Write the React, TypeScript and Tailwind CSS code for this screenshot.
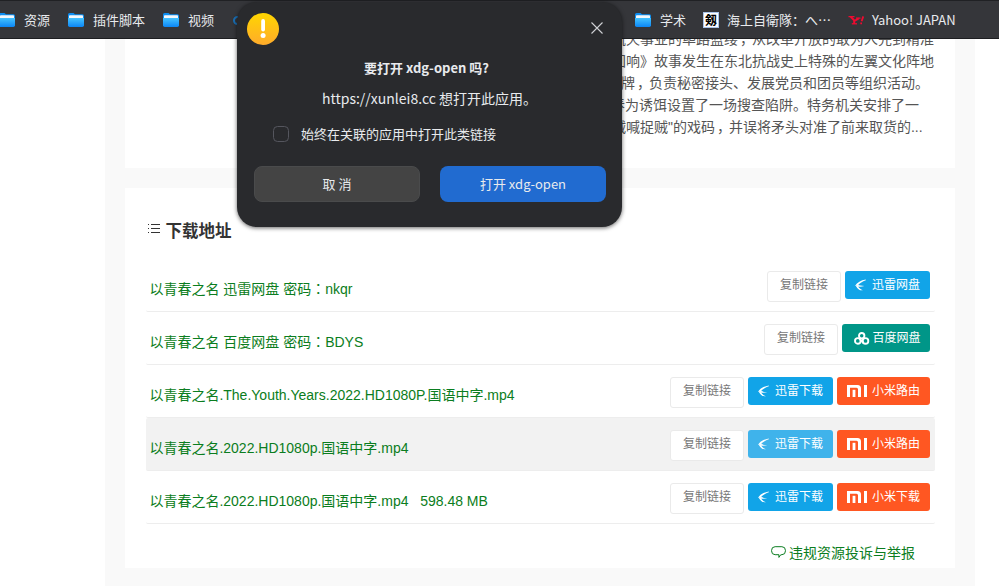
import type { ReactNode } from "react";

const bookmarksLeft = [
    { label: "资源", className: "w-[69px]" },
    { label: "插件脚本", className: "w-[95px]" },
    { label: "视频", className: "w-[70px]" },
]

const introLines = [
    { text: "航天事业的筚路蓝缕，从改革开放的敢为人先到精准", className: "pl-[467px]" },
    { text: "回响》故事发生在东北抗战史上特殊的左翼文化阵地", className: "pl-[467px]" },
    { text: "招牌，负责秘密接头、发展党员和团员等组织活动。", className: "pl-[462px]" },
    { text: "春为诱饵设置了一场搜查陷阱。特务机关安排了一", className: "pl-[466px]" },
    { text: "贼喊捉贼\"的戏码，并误将矛头对准了前来取货的...", className: "pl-[467px]" },
]

type Action = { kind: "thunder" | "baidu" | "mi"; label: string }

const downloads: { name: string; size?: string; hovered?: boolean; actions: Action[] }[] = [
    { name: "以青春之名 迅雷网盘 密码：nkqr", actions: [{ kind: "thunder", label: "迅雷网盘" }] },
    { name: "以青春之名 百度网盘 密码：BDYS", actions: [{ kind: "baidu", label: "百度网盘" }] },
    {
        name: "以青春之名.The.Youth.Years.2022.HD1080P.国语中字.mp4",
        actions: [{ kind: "thunder", label: "迅雷下载" }, { kind: "mi", label: "小米路由" }],
    },
    {
        name: "以青春之名.2022.HD1080p.国语中字.mp4",
        hovered: true,
        actions: [{ kind: "thunder", label: "迅雷下载" }, { kind: "mi", label: "小米路由" }],
    },
    {
        name: "以青春之名.2022.HD1080p.国语中字.mp4",
        size: "598.48 MB",
        actions: [{ kind: "thunder", label: "迅雷下载" }, { kind: "mi", label: "小米下载" }],
    },
]

// Fullwidth comma and colon sit in the middle of the em box
const Punctuated = ({ text }: { text: string }) => (
    <>
        {text.split(/([，：])/).map((part, i) => {
            if (part === "，") return <span key={i} className="-mr-[2px] pl-[2px]">{part}</span>
            if (part === "：") return <span key={i} lang="zh-TW" className="font-['Noto_Sans_CJK_TC',sans-serif] leading-none">{part}</span>
            return part
        })}
    </>
)

const FolderIcon = () => (
    <svg width="16" height="16" viewBox="0 0 16 16" className="shrink-0">
        <defs>
            <linearGradient id="folder" x1="0" y1="0" x2="0" y2="1">
                <stop offset="0" stopColor="#45c3ff" />
                <stop offset="1" stopColor="#0b86f5" />
            </linearGradient>
        </defs>
        <path d="M0 2.5Q0 1 1.5 1H5.5L7 2.3H14.5Q16 2.3 16 4V8H0Z" fill="#0d8df0" />
        <path d="M1 4Q1 3.2 1.8 3.2H14.2Q15 3.2 15 4V8H1Z" fill="#f4f7fa" />
        <path d="M0 6H16V13.3Q16 15 14.3 15H1.7Q0 15 0 13.3Z" fill="url(#folder)" />
    </svg>
)

const YahooIcon = () => (
    <svg width="17" height="12" viewBox="0 0 17 12" className="shrink-0" fill="none" stroke="#f10a30">
        <path d="M0.5 2.6H6.5M8 4.1H12.5" strokeWidth="1.2" />
        <path d="M2.7 2.8L6.2 6.4V9.8M10.8 4.4L6.4 7" strokeWidth="2" />
        <path d="M3.8 9.8H9" strokeWidth="1.3" />
        <path d="M15.3 2.4L13.6 7.2" strokeWidth="1.8" />
        <path d="M12.3 9.4H14" strokeWidth="1.6" />
    </svg>
)

const ThunderIcon = () => (
    <svg width="11" height="12" viewBox="0 0 12 12" className="shrink-0" fill="#fff" preserveAspectRatio="none">
        <path d="M11.8 0.4C6.4 1.2 2.3 3.3 0.1 6.8L3.2 6.3C5.2 4.2 8 2.4 11.8 1.3Z" />
        <path d="M0.1 6.8L3.2 6.1C4.5 6.5 7.3 6.9 10.2 7.1C6.8 8.1 4.3 8 2.4 7.4Z" />
        <path d="M1.6 6.8L3.2 7.2C4.4 9 6 10.2 8.6 11.2C6 11.9 2.8 10.4 1.2 7.2Z" />
    </svg>
)

const BaiduIcon = () => (
    <svg width="16" height="13" viewBox="0 0 16 13" className="shrink-0" fill="none" stroke="#fff" strokeWidth="1.9">
        <circle cx="7.7" cy="3.7" r="2.7" />
        <circle cx="3.8" cy="8.9" r="2.8" />
        <circle cx="11.5" cy="8.9" r="2.8" />
        <path d="M5.7 6.8L9.6 11" />
    </svg>
)

const MiIcon = () => (
    <svg width="20" height="12" viewBox="0 0 20 12" className="shrink-0" fill="#fff">
        <path d="M0 0H10.5Q14 0 14 3.5V12H11V4.2Q11 2.7 9.5 2.7H3V12H0Z" />
        <path d="M5.6 4.8H8.4V12H5.6Z" />
        <path d="M17 0H20V12H17Z" />
    </svg>
)

const ActionButton = ({ action, hovered }: { action: Action; hovered?: boolean }) => {
    if (action.kind === "baidu") {
        return (
            <button className="flex h-7 w-[88px] items-center gap-[3px] rounded-[3px] bg-[#009688] pl-[11.5px] text-xs text-white">
                <BaiduIcon />
                {action.label}
            </button>
        )
    }
    if (action.kind === "mi") {
        return (
            <button className="flex h-7 w-[93px] items-center gap-[5px] rounded-[3px] bg-[#ff5722] pl-[10px] text-xs text-white">
                <MiIcon />
                {action.label}
            </button>
        )
    }
    return (
        <button className={`flex h-7 w-[85px] items-center gap-[6px] rounded-[3px] pl-[10px] text-xs text-white ${hovered ? "bg-[#3fb3eb]" : "bg-[#11a4e8]"}`}>
            <ThunderIcon />
            <span>{action.label}</span>
        </button>
    )
}

const Bookmark = ({ icon, children, className }: { icon: ReactNode; children: ReactNode; className?: string }) => (
    <div className={`flex shrink-0 items-center gap-[9px] whitespace-nowrap ${className ?? ""}`}>
        {icon}
        <span>{children}</span>
    </div>
)

const BookmarksBar = () => (
    <header className="relative flex h-[39px] items-center border-t border-b border-t-[#202124] border-b-[#1d1e21] bg-[#35363a] pt-px font-['Noto_Sans_CJK_SC',sans-serif] text-[13px] text-[#e8eaed]">
        <div className="-ml-px flex w-[636px] shrink-0 items-center">
            {bookmarksLeft.map(({ label, className }) => (
                <Bookmark key={label} icon={<FolderIcon />} className={className}>{label}</Bookmark>
            ))}
            <span className="size-[9px] rounded-full border-2 border-[#1a6fb5]" />
        </div>
        <Bookmark icon={<FolderIcon />} className="w-[68px]">学术</Bookmark>
        <Bookmark
            icon={<span className="flex size-4 items-center justify-center border border-[#a9c4ea] bg-white text-xs leading-none font-bold text-black">剱</span>}
            className="w-[145px] gap-[8px]!"
        >
            海上自衛隊：へ⋯
        </Bookmark>
        <Bookmark icon={<YahooIcon />} className="gap-[7px]!">Yahoo! JAPAN</Bookmark>
    </header>
)

const PermissionDialog = () => (
    <div role="dialog" className="absolute top-[2px] left-[237px] h-[225px] w-[385px] rounded-[20px] bg-[#292a2d] pr-4 pl-[17px] font-['Noto_Sans_CJK_SC',sans-serif] text-[13px] text-[#e8eaed] shadow-[0_1px_4px_rgba(0,0,0,0.6)]">
        <div className="-mx-[7px] flex h-[55px] justify-between pt-[11px] pr-[10.5px]">
            <svg width="32" height="32" viewBox="0 0 32 32">
                <defs>
                    <linearGradient id="warning" x1="0" y1="0" x2="0" y2="1">
                        <stop offset="0" stopColor="#ffd600" />
                        <stop offset="1" stopColor="#ffab2b" />
                    </linearGradient>
                </defs>
                <circle cx="16" cy="16" r="16" fill="url(#warning)" />
                <rect x="14.2" y="6" width="3.8" height="12.5" rx="1.9" fill="#fff" />
                <circle cx="16.1" cy="22.6" r="2.5" fill="#fff" />
            </svg>
            <svg width="12" height="12" viewBox="0 0 12 12" className="mt-[8.5px]" stroke="#d0d2d5" strokeWidth="1.1">
                <path d="M0.5 0.5L11.5 11.5M11.5 0.5L0.5 11.5" />
            </svg>
        </div>
        <h2 className="-ml-[7px] h-[22px] text-center leading-[22px] font-bold">要打开 xdg-open 吗?</h2>
        <p className="mt-[7px] -ml-px h-6 text-center text-sm leading-6">https://xunlei8.cc 想打开此应用。</p>
        <label className="mt-3 flex h-6 items-center gap-[12px] pl-[19px]">
            <span className="size-4 rounded-[4.5px] border border-[#55565e]" />
            始终在关联的应用中打开此类链接
        </label>
        <div className="mt-5 flex gap-5">
            <button className="h-9 w-[166px] shrink-0 rounded-lg border border-[#4a4b4c] bg-[#444444]">取 消</button>
            <button className="h-9 w-[166px] shrink-0 rounded-lg bg-[#216bd0]">打开 xdg-open</button>
        </div>
    </div>
)

export default function App() {
    return (
        <div className="relative h-[586px] w-[999px] overflow-hidden bg-white font-['Liberation_Sans','Noto_Sans_CJK_SC',sans-serif]">
            <BookmarksBar />
            <main className="ml-[105px] h-[547px] w-[870px] overflow-hidden bg-[#f9f9f9] px-5">
                <section className="h-[129px] overflow-hidden bg-white text-sm leading-[22px] text-[#555]">
                    <div className="-mt-[11px] pl-[20px]">
                        {introLines.map(({ text, className }) => (
                            <p key={text} className={`h-[22px] whitespace-nowrap ${className}`}><Punctuated text={text} /></p>
                        ))}
                    </div>
                </section>
                <section className="mt-5 h-[380px] bg-white pr-5 pl-[21px]">
                    <h3 className="flex h-[71px] items-center gap-[6px] pt-[14px] text-[#333]">
                        <svg width="12" height="11" viewBox="0 0 12 11" className="mt-[-5px] ml-[1.5px]" stroke="#333">
                            <path d="M3 1.5H12M3 5.5H12M3 9.5H12" />
                            <path d="M0 1.5H1M0 5.5H1M0 9.5H1" />
                        </svg>
                        <span className="pt-px text-[16.5px] font-bold">下载地址</span>
                    </h3>
                    <ul>
                        {downloads.map((item, i) => (
                            <li key={i} className={`flex h-[53px] justify-between rounded-[2px] border-b border-[#ededed] pr-[5px] pl-[3.4px] ${item.hovered ? "bg-[#f2f2f2]" : ""}`}>
                                <span className="pt-[19px] text-sm leading-[22px] whitespace-pre text-[#0b7d20]">
                                    <Punctuated text={item.name} />
                                    {item.size && `   ${item.size}`}
                                </span>
                                <div className="flex items-start gap-1 pt-3">
                                    <button className="h-[31px] w-[74px] rounded-[3px] border border-[#eaeaea] bg-white pb-[3px] text-xs text-[#777]">复制链接</button>
                                    {item.actions.map((action) => (
                                        <ActionButton key={action.kind} action={action} hovered={item.hovered} />
                                    ))}
                                </div>
                            </li>
                        ))}
                    </ul>
                    <div className="flex items-center justify-end gap-[3px] pt-[18px] pr-5 text-sm leading-[22px] text-[#0b7d20]">
                        <svg width="15" height="13" viewBox="0 0 15 13" className="-mt-[2px]" fill="none" stroke="currentColor">
                            <path d="M4.1 0.7H10.9A3.6 4 0 0 1 10.9 8.7H9.8L7.9 11.4V8.7H4.1A3.6 4 0 0 1 4.1 0.7Z" />
                        </svg>
                        违规资源投诉与举报
                    </div>
                </section>
            </main>
            <PermissionDialog />
        </div>
    )
}
